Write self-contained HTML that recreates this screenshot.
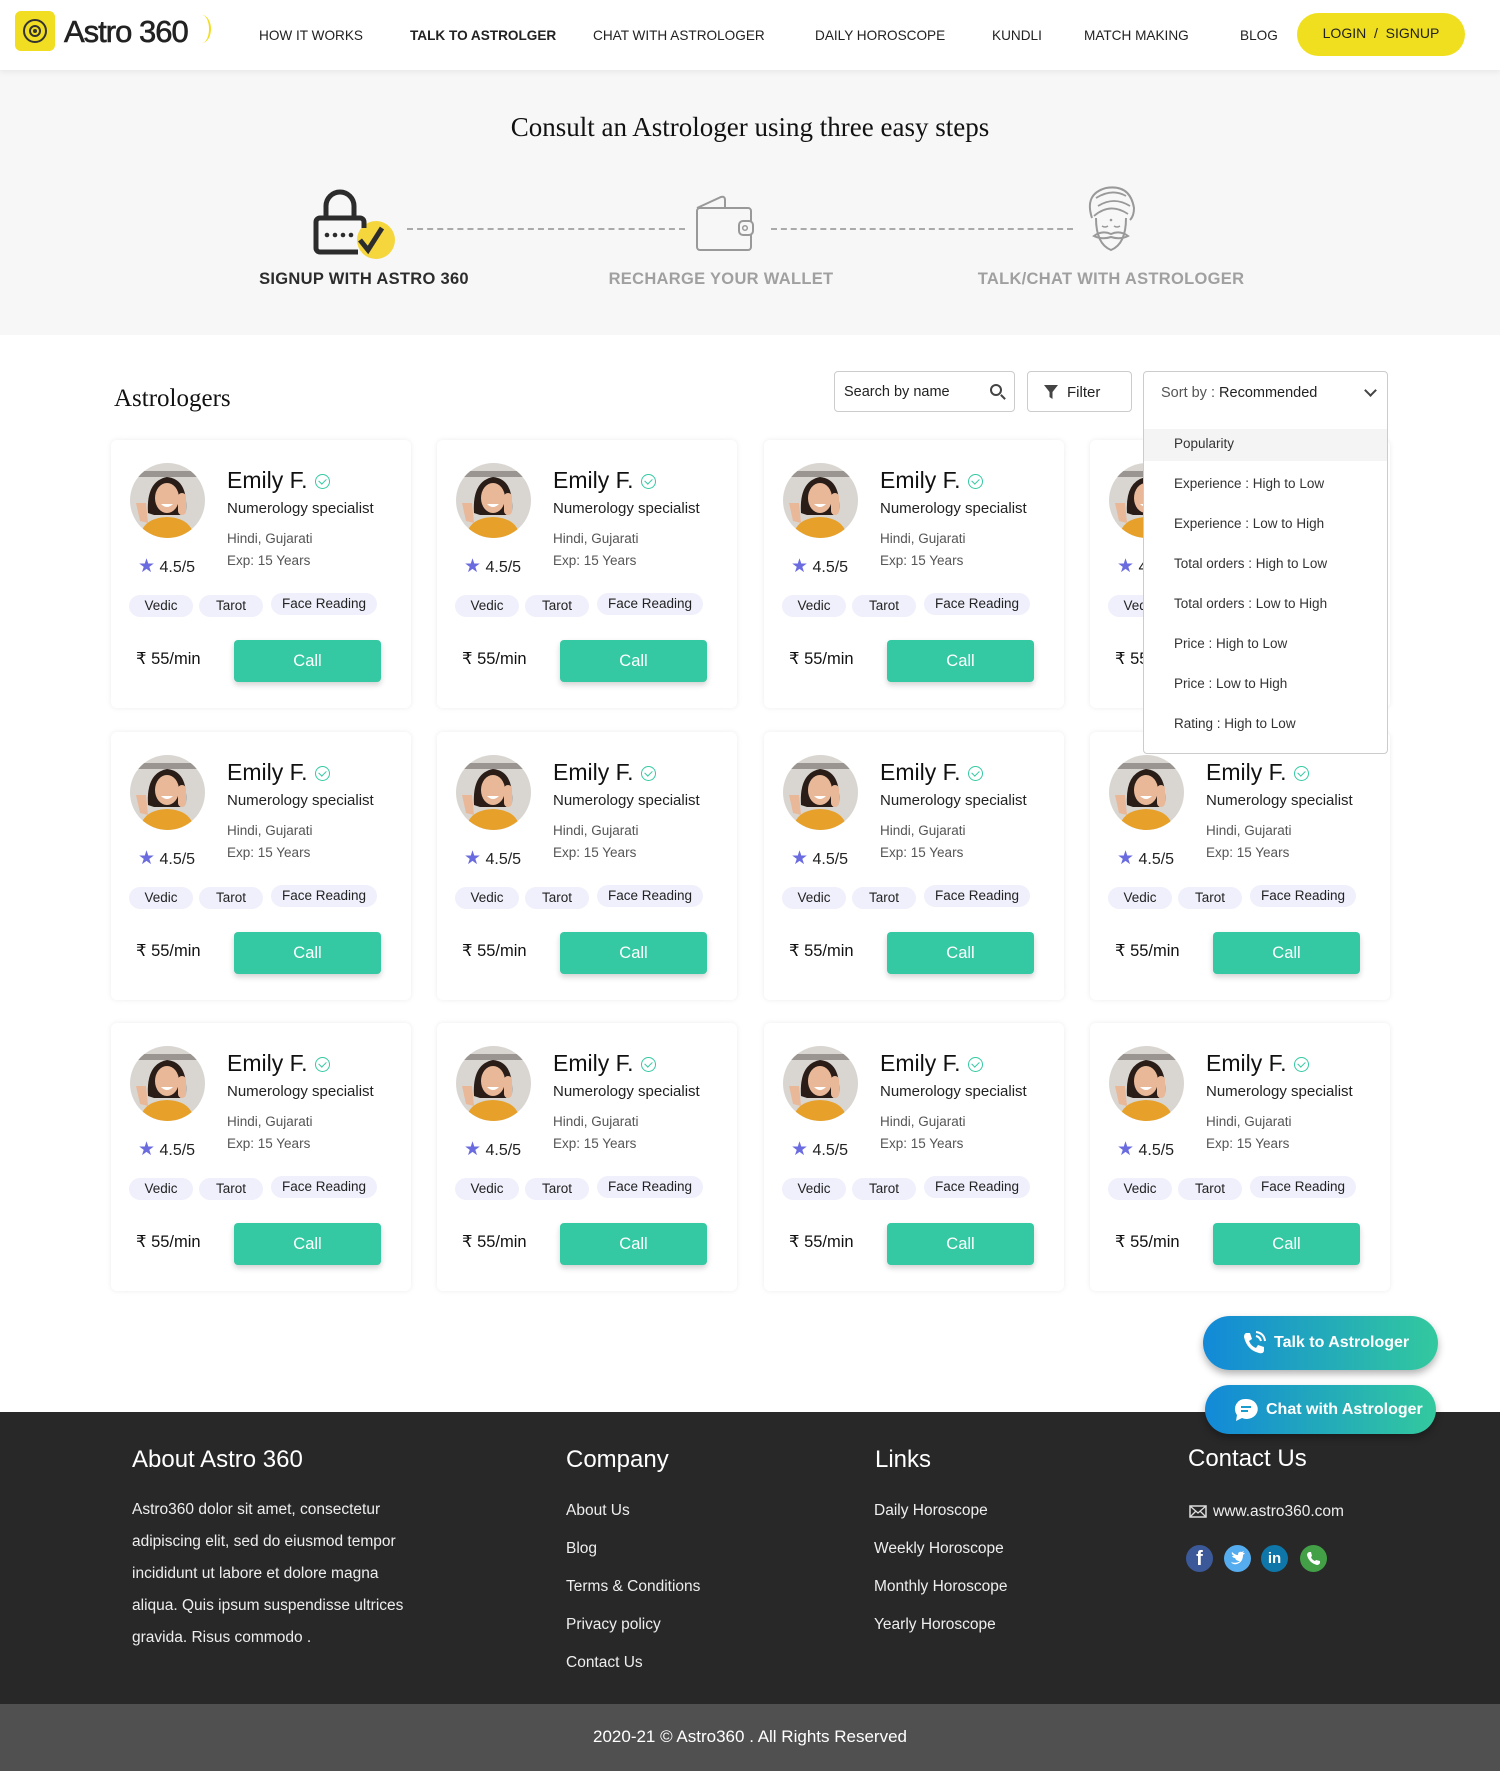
<!DOCTYPE html>
<html><head><meta charset="utf-8"><style>
*{margin:0;padding:0;box-sizing:border-box}
body{width:1500px;height:1771px;position:relative;background:#fff;font-family:"Liberation Sans",sans-serif;color:#111;overflow:hidden}
.a{position:absolute}
.hdr{left:0;top:0;width:1500px;height:70px;background:#fff;box-shadow:0 2px 6px rgba(0,0,0,.07);z-index:2}
.nav{top:28px;font-size:13.6px;color:#222;white-space:nowrap;letter-spacing:0}
.hero{left:0;top:70px;width:1500px;height:265px;background:#f7f7f7}
.step{top:270px;font-size:16.5px;font-weight:bold;letter-spacing:.3px;text-align:center;width:340px}
.dash{top:228px;border-top:2px dashed #aaa;height:0}
.card{width:300px;height:268px;background:#fff;border-radius:6px;box-shadow:0 0 6px rgba(0,0,0,.08)}
.card svg.av{position:absolute;left:19px;top:23px;width:75px;height:75px}
.nm{left:116px;top:27px;font-size:23px;color:#111}
.ck{left:204px;top:34px;width:15px;height:15px;border:1.5px solid #34c9a3;border-radius:50%}
.ck:after{content:"";position:absolute;left:3.5px;top:2px;width:4px;height:6px;border:solid #34c9a3;border-width:0 1.5px 1.5px 0;transform:rotate(45deg)}
.sp{left:116px;top:60px;font-size:15px;color:#222}
.lg{left:116px;top:91px;font-size:13.5px;color:#555}
.ex{left:116px;top:113px;font-size:13.5px;color:#555}
.rt{left:27px;top:115px;font-size:16px;color:#222}
.rt b{color:#6b6be0;font-size:19px;font-weight:normal}
.tg{top:155px;height:22px;border-radius:11px;background:#f0f0fc;font-size:13.5px;text-align:center;line-height:22px;color:#222}
.pr{left:25px;top:209px;font-size:16.5px;color:#111}
.btn{left:123px;top:200px;width:147px;height:42px;background:#34c9a3;border-radius:4px;color:#fff;font-size:16.5px;text-align:center;line-height:42px;box-shadow:0 3px 6px rgba(0,0,0,.18)}
.dd{left:1143px;top:371px;width:245px;height:383px;background:#fff;border:1px solid #ccc;border-radius:4px;z-index:3}
.di{left:30px;font-size:13.5px;color:#333}
.fh{top:1446px;font-size:24px;color:#fff}
.fl{font-size:15.5px;color:#eee}
.fb{height:54px;border-radius:27px;background:linear-gradient(90deg,#1289d8,#33c99e);color:#fff;font-weight:bold;font-size:16px;box-shadow:0 4px 8px rgba(0,0,0,.3);z-index:4}
</style></head><body>
<svg width="0" height="0" style="position:absolute"><defs>
<symbol id="av" viewBox="0 0 75 75">
<clipPath id="cc"><circle cx="37.5" cy="37.5" r="37.5"/></clipPath>
<g clip-path="url(#cc)">
<rect width="75" height="75" fill="#d9d6d2"/><rect y="8" width="75" height="6" fill="#9a9590"/>
<path d="M18 50 Q16 18 37 14 Q58 16 56 48 L50 52 L24 52Z" fill="#2a1d18"/>
<ellipse cx="37" cy="35" rx="12" ry="15" fill="#e8b898"/>
<path d="M31 41 Q37 47 43 41Z" fill="#fff"/>
<path d="M10 75 Q12 55 37 54 Q62 55 64 75Z" fill="#e7a12a"/>
<path d="M6 40 L10 58 L18 60 L16 40Z" fill="#e9b898"/>
<rect x="48" y="30" width="8" height="22" rx="4" fill="#e8b898"/>
</g></symbol></defs></svg>

<div class="a hdr">
 <div class="a" style="left:15px;top:11px;width:40px;height:40px;background:#f1dd22;border-radius:6px">
  <div class="a" style="left:8px;top:8px;width:24px;height:24px;border:2px solid #333;border-radius:50%"></div>
  <div class="a" style="left:14px;top:14px;width:12px;height:12px;border:2px solid #333;border-radius:50%"></div>
  <div class="a" style="left:18px;top:18px;width:4px;height:4px;background:#333;border-radius:50%"></div>
 </div>
 <div class="a" style="left:64px;top:14px;font-size:31px;color:#222;letter-spacing:-1px;-webkit-text-stroke:.6px #222">Astro 360</div>
 <div class="a" style="left:193px;top:15px;width:18px;height:28px;border-right:2.5px solid #f1dd22;border-radius:50%"></div>
 <div class="a nav" style="left:259px">HOW IT WORKS</div>
 <div class="a nav" style="left:410px;font-weight:bold">TALK TO ASTROLGER</div>
 <div class="a nav" style="left:593px">CHAT WITH ASTROLOGER</div>
 <div class="a nav" style="left:815px">DAILY HOROSCOPE</div>
 <div class="a nav" style="left:992px">KUNDLI</div>
 <div class="a nav" style="left:1084px">MATCH MAKING</div>
 <div class="a nav" style="left:1240px">BLOG</div>
 <div class="a" style="left:1297px;top:13px;width:168px;height:43px;background:#f0df1f;border-radius:22px;font-size:14px;text-align:center;line-height:41px;color:#222">LOGIN &nbsp;/&nbsp; SIGNUP</div>
</div>

<div class="a hero">
 <div class="a" style="left:0;width:1500px;top:42px;text-align:center;font-family:'Liberation Serif',serif;font-size:27px;color:#111">Consult an Astrologer using three easy steps</div>
</div>
<svg class="a" style="left:310px;top:186px" width="90" height="76" viewBox="0 0 90 76">
 <circle cx="66" cy="54" r="19" fill="#f5d63d"/>
 <path d="M16 32 V20 a14 14 0 0 1 28 0 V32" fill="none" stroke="#2c2c2c" stroke-width="5"/>
 <path d="M48 66 H10 a4 4 0 0 1 -4 -4 V36 a4 4 0 0 1 4 -4 H50 a4 4 0 0 1 4 4 V42" fill="none" stroke="#2c2c2c" stroke-width="5"/>
 <circle cx="17" cy="49" r="2.3" fill="#2c2c2c"/><circle cx="25" cy="49" r="2.3" fill="#2c2c2c"/><circle cx="33" cy="49" r="2.3" fill="#2c2c2c"/><circle cx="41" cy="49" r="2.3" fill="#2c2c2c"/>
 <path d="M50 54 L58 64 L72 42" fill="none" stroke="#2c2c2c" stroke-width="5"/>
</svg>
<div class="a dash" style="left:407px;width:278px"></div>
<svg class="a" style="left:695px;top:194px" width="62" height="58" viewBox="0 0 62 58">
 <path d="M2 14 L26 3 Q30 2 30 6 V14" fill="none" stroke="#999" stroke-width="2"/>
 <rect x="2" y="14" width="54" height="42" rx="3" fill="none" stroke="#999" stroke-width="2"/>
 <rect x="44" y="27" width="14" height="14" rx="4" fill="#f7f7f7" stroke="#999" stroke-width="2"/>
 <circle cx="50" cy="34" r="2.3" fill="none" stroke="#999" stroke-width="1.5"/>
</svg>
<div class="a dash" style="left:771px;width:302px"></div>
<svg class="a" style="left:1084px;top:184px" width="54" height="70" viewBox="0 0 54 70">
 <path d="M8 34 Q0 10 22 4 Q46 0 50 24 Q50 32 46 36" fill="none" stroke="#999" stroke-width="2"/>
 <path d="M10 32 Q26 18 44 30 M14 22 Q30 12 46 22 M12 14 Q28 4 42 12" fill="none" stroke="#999" stroke-width="1.8"/>
 <path d="M12 34 Q12 60 27 66 Q42 60 42 34" fill="none" stroke="#999" stroke-width="2"/>
 <path d="M18 42 q3 2 6 0 M30 42 q3 2 6 0" fill="none" stroke="#999" stroke-width="1.5"/>
 <path d="M10 52 Q18 46 27 50 Q36 46 44 52 Q36 56 27 53 Q18 56 10 52Z" fill="none" stroke="#999" stroke-width="2"/>
 <circle cx="27" cy="36" r="1.3" fill="#999"/>
</svg>
<div class="a step" style="left:194px;color:#2c2c2c">SIGNUP WITH ASTRO 360</div>
<div class="a step" style="left:551px;color:#a0a0a0">RECHARGE YOUR WALLET</div>
<div class="a step" style="left:941px;color:#a0a0a0">TALK/CHAT WITH ASTROLOGER</div>

<div class="a" style="left:114px;top:385px;font-family:'Liberation Serif',serif;font-size:25px">Astrologers</div>
<div class="a" style="left:834px;top:371px;width:181px;height:41px;border:1px solid #ccc;border-radius:4px">
 <div class="a" style="left:9px;top:12px;font-size:14.5px;color:#222">Search by name</div>
 <div class="a" style="left:155px;top:12px;width:12px;height:12px;border:2px solid #444;border-radius:50%"></div>
 <div class="a" style="left:165px;top:24px;width:6px;height:2px;background:#444;transform:rotate(45deg)"></div>
</div>
<div class="a" style="left:1027px;top:371px;width:105px;height:41px;border:1px solid #ccc;border-radius:4px">
 <svg class="a" style="left:16px;top:13px" width="14" height="14" viewBox="0 0 14 14"><path d="M0 0H14L8.5 7V14L5.5 12V7Z" fill="#444"/></svg>
 <div class="a" style="left:39px;top:12px;font-size:15px;color:#222">Filter</div>
</div>
<div class="a dd">
 <div class="a" style="left:17px;top:13px;font-size:14.5px;color:#555">Sort by : <span style="color:#222">Recommended</span></div>
 <div class="a" style="left:222px;top:14px;width:9px;height:9px;border:solid #444;border-width:0 2px 2px 0;transform:rotate(45deg)"></div>
 <div class="a" style="left:0;top:57px;width:243px;height:32px;background:#f4f4f4"></div>
 <div class="a di" style="top:64px">Popularity</div>
 <div class="a di" style="top:104px">Experience : High to Low</div>
 <div class="a di" style="top:144px">Experience : Low to High</div>
 <div class="a di" style="top:184px">Total orders : High to Low</div>
 <div class="a di" style="top:224px">Total orders : Low to High</div>
 <div class="a di" style="top:264px">Price : High to Low</div>
 <div class="a di" style="top:304px">Price : Low to High</div>
 <div class="a di" style="top:344px">Rating : High to Low</div>
</div>

<!-- cards -->
<div class="a card" style="left:111px;top:440px"><svg class="av"><use href="#av"/></svg><div class="a nm">Emily F.</div><div class="a ck"></div><div class="a sp">Numerology specialist</div><div class="a lg">Hindi, Gujarati</div><div class="a ex">Exp: 15 Years</div><div class="a rt"><b>★</b> 4.5/5</div><div class="a tg" style="left:18px;width:64px">Vedic</div><div class="a tg" style="left:88px;width:64px">Tarot</div><div class="a tg" style="left:160px;width:106px;top:153px">Face Reading</div><div class="a pr">₹ 55/min</div><div class="a btn">Call</div></div>
<div class="a card" style="left:437px;top:440px"><svg class="av"><use href="#av"/></svg><div class="a nm">Emily F.</div><div class="a ck"></div><div class="a sp">Numerology specialist</div><div class="a lg">Hindi, Gujarati</div><div class="a ex">Exp: 15 Years</div><div class="a rt"><b>★</b> 4.5/5</div><div class="a tg" style="left:18px;width:64px">Vedic</div><div class="a tg" style="left:88px;width:64px">Tarot</div><div class="a tg" style="left:160px;width:106px;top:153px">Face Reading</div><div class="a pr">₹ 55/min</div><div class="a btn">Call</div></div>
<div class="a card" style="left:764px;top:440px"><svg class="av"><use href="#av"/></svg><div class="a nm">Emily F.</div><div class="a ck"></div><div class="a sp">Numerology specialist</div><div class="a lg">Hindi, Gujarati</div><div class="a ex">Exp: 15 Years</div><div class="a rt"><b>★</b> 4.5/5</div><div class="a tg" style="left:18px;width:64px">Vedic</div><div class="a tg" style="left:88px;width:64px">Tarot</div><div class="a tg" style="left:160px;width:106px;top:153px">Face Reading</div><div class="a pr">₹ 55/min</div><div class="a btn">Call</div></div>
<div class="a card" style="left:1090px;top:440px"><svg class="av"><use href="#av"/></svg><div class="a nm">Emily F.</div><div class="a ck"></div><div class="a sp">Numerology specialist</div><div class="a lg">Hindi, Gujarati</div><div class="a ex">Exp: 15 Years</div><div class="a rt"><b>★</b> 4.5/5</div><div class="a tg" style="left:18px;width:64px">Vedic</div><div class="a tg" style="left:88px;width:64px">Tarot</div><div class="a tg" style="left:160px;width:106px;top:153px">Face Reading</div><div class="a pr">₹ 55/min</div><div class="a btn">Call</div></div>

<div class="a card" style="left:111px;top:732px"><svg class="av"><use href="#av"/></svg><div class="a nm">Emily F.</div><div class="a ck"></div><div class="a sp">Numerology specialist</div><div class="a lg">Hindi, Gujarati</div><div class="a ex">Exp: 15 Years</div><div class="a rt"><b>★</b> 4.5/5</div><div class="a tg" style="left:18px;width:64px">Vedic</div><div class="a tg" style="left:88px;width:64px">Tarot</div><div class="a tg" style="left:160px;width:106px;top:153px">Face Reading</div><div class="a pr">₹ 55/min</div><div class="a btn">Call</div></div>
<div class="a card" style="left:437px;top:732px"><svg class="av"><use href="#av"/></svg><div class="a nm">Emily F.</div><div class="a ck"></div><div class="a sp">Numerology specialist</div><div class="a lg">Hindi, Gujarati</div><div class="a ex">Exp: 15 Years</div><div class="a rt"><b>★</b> 4.5/5</div><div class="a tg" style="left:18px;width:64px">Vedic</div><div class="a tg" style="left:88px;width:64px">Tarot</div><div class="a tg" style="left:160px;width:106px;top:153px">Face Reading</div><div class="a pr">₹ 55/min</div><div class="a btn">Call</div></div>
<div class="a card" style="left:764px;top:732px"><svg class="av"><use href="#av"/></svg><div class="a nm">Emily F.</div><div class="a ck"></div><div class="a sp">Numerology specialist</div><div class="a lg">Hindi, Gujarati</div><div class="a ex">Exp: 15 Years</div><div class="a rt"><b>★</b> 4.5/5</div><div class="a tg" style="left:18px;width:64px">Vedic</div><div class="a tg" style="left:88px;width:64px">Tarot</div><div class="a tg" style="left:160px;width:106px;top:153px">Face Reading</div><div class="a pr">₹ 55/min</div><div class="a btn">Call</div></div>
<div class="a card" style="left:1090px;top:732px"><svg class="av"><use href="#av"/></svg><div class="a nm">Emily F.</div><div class="a ck"></div><div class="a sp">Numerology specialist</div><div class="a lg">Hindi, Gujarati</div><div class="a ex">Exp: 15 Years</div><div class="a rt"><b>★</b> 4.5/5</div><div class="a tg" style="left:18px;width:64px">Vedic</div><div class="a tg" style="left:88px;width:64px">Tarot</div><div class="a tg" style="left:160px;width:106px;top:153px">Face Reading</div><div class="a pr">₹ 55/min</div><div class="a btn">Call</div></div>

<div class="a card" style="left:111px;top:1023px"><svg class="av"><use href="#av"/></svg><div class="a nm">Emily F.</div><div class="a ck"></div><div class="a sp">Numerology specialist</div><div class="a lg">Hindi, Gujarati</div><div class="a ex">Exp: 15 Years</div><div class="a rt"><b>★</b> 4.5/5</div><div class="a tg" style="left:18px;width:64px">Vedic</div><div class="a tg" style="left:88px;width:64px">Tarot</div><div class="a tg" style="left:160px;width:106px;top:153px">Face Reading</div><div class="a pr">₹ 55/min</div><div class="a btn">Call</div></div>
<div class="a card" style="left:437px;top:1023px"><svg class="av"><use href="#av"/></svg><div class="a nm">Emily F.</div><div class="a ck"></div><div class="a sp">Numerology specialist</div><div class="a lg">Hindi, Gujarati</div><div class="a ex">Exp: 15 Years</div><div class="a rt"><b>★</b> 4.5/5</div><div class="a tg" style="left:18px;width:64px">Vedic</div><div class="a tg" style="left:88px;width:64px">Tarot</div><div class="a tg" style="left:160px;width:106px;top:153px">Face Reading</div><div class="a pr">₹ 55/min</div><div class="a btn">Call</div></div>
<div class="a card" style="left:764px;top:1023px"><svg class="av"><use href="#av"/></svg><div class="a nm">Emily F.</div><div class="a ck"></div><div class="a sp">Numerology specialist</div><div class="a lg">Hindi, Gujarati</div><div class="a ex">Exp: 15 Years</div><div class="a rt"><b>★</b> 4.5/5</div><div class="a tg" style="left:18px;width:64px">Vedic</div><div class="a tg" style="left:88px;width:64px">Tarot</div><div class="a tg" style="left:160px;width:106px;top:153px">Face Reading</div><div class="a pr">₹ 55/min</div><div class="a btn">Call</div></div>
<div class="a card" style="left:1090px;top:1023px"><svg class="av"><use href="#av"/></svg><div class="a nm">Emily F.</div><div class="a ck"></div><div class="a sp">Numerology specialist</div><div class="a lg">Hindi, Gujarati</div><div class="a ex">Exp: 15 Years</div><div class="a rt"><b>★</b> 4.5/5</div><div class="a tg" style="left:18px;width:64px">Vedic</div><div class="a tg" style="left:88px;width:64px">Tarot</div><div class="a tg" style="left:160px;width:106px;top:153px">Face Reading</div><div class="a pr">₹ 55/min</div><div class="a btn">Call</div></div>

<!-- floating buttons -->
<div class="a fb" style="left:1203px;top:1316px;width:235px">
 <svg class="a" style="left:38px;top:14px" width="26" height="26" viewBox="0 0 26 26"><path d="M5 3 L9 3 L11 9 L8 11 Q10 16 15 18 L17 15 L23 17 L23 21 Q22 24 18 23 Q6 20 3 7 Q3 4 5 3Z" fill="#fff"/><path d="M15 6 Q19 7 20 11 M15 2 Q23 3 24 11" fill="none" stroke="#fff" stroke-width="2"/></svg>
 <div class="a" style="left:71px;top:18px">Talk to Astrologer</div>
</div>
<div class="a fb" style="left:1205px;top:1385px;width:231px;height:49px;border-radius:25px">
 <svg class="a" style="left:29px;top:13px" width="24" height="24" viewBox="0 0 24 24"><path d="M12 1 A11 10 0 1 1 8 20 L2 23 L3 17 A10 10 0 0 1 12 1Z" fill="#fff"/><path d="M7 9H17M7 13H14" stroke="#1a9ccf" stroke-width="2"/></svg>
 <div class="a" style="left:61px;top:16px">Chat with Astrologer</div>
</div>

<!-- footer -->
<div class="a" style="left:0;top:1412px;width:1500px;height:292px;background:#282828"></div>
<div class="a" style="left:0;top:1704px;width:1500px;height:67px;background:#505050"></div>
<div class="a fh" style="left:132px">About Astro 360</div>
<div class="a fh" style="left:566px">Company</div>
<div class="a fh" style="left:875px">Links</div>
<div class="a fh" style="left:1188px;top:1445px">Contact Us</div>
<div class="a fl" style="left:132px;top:1494px;line-height:32px;width:278px">Astro360 dolor sit amet, consectetur adipiscing elit, sed do eiusmod tempor incididunt ut labore et dolore magna aliqua. Quis ipsum suspendisse ultrices gravida. Risus commodo .</div>
<div class="a fl" style="left:566px;top:1502px">About Us</div>
<div class="a fl" style="left:566px;top:1540px">Blog</div>
<div class="a fl" style="left:566px;top:1578px">Terms &amp; Conditions</div>
<div class="a fl" style="left:566px;top:1616px">Privacy policy</div>
<div class="a fl" style="left:566px;top:1654px">Contact Us</div>
<div class="a fl" style="left:874px;top:1502px">Daily Horoscope</div>
<div class="a fl" style="left:874px;top:1540px">Weekly Horoscope</div>
<div class="a fl" style="left:874px;top:1578px">Monthly Horoscope</div>
<div class="a fl" style="left:874px;top:1616px">Yearly Horoscope</div>
<svg class="a" style="left:1189px;top:1505px" width="18" height="13" viewBox="0 0 18 13"><rect x="1" y="1" width="16" height="11" fill="none" stroke="#ddd" stroke-width="1.5"/><path d="M1 1 L9 8 L17 1 M1 12 L7 6 M17 12 L11 6" fill="none" stroke="#ddd" stroke-width="1.3"/></svg>
<div class="a fl" style="left:1213px;top:1503px">www.astro360.com</div>
<div class="a" style="left:1186px;top:1545px;width:27px;height:27px;border-radius:50%;background:#3b5998;color:#fff;font-weight:bold;font-size:20px;text-align:center;line-height:29px">f</div>
<div class="a" style="left:1224px;top:1545px;width:27px;height:27px;border-radius:50%;background:#55acee"><svg width="27" height="27" viewBox="0 0 27 27"><path d="M7 17 Q12 19 16 16 Q12 16 11 13 Q9 13 8 11 Q10 11 10 11 Q7 9 8 7 Q11 10 14 10 Q14 6 18 7 L20 6 L19 8 L21 8 Q20 9 19 10 Q19 17 13 19 Q9 20 7 17Z" fill="#fff"/></svg></div>
<div class="a" style="left:1261px;top:1545px;width:27px;height:27px;border-radius:50%;background:#0e76a8;color:#fff;font-weight:bold;font-size:15px;text-align:center;line-height:27px">in</div>
<div class="a" style="left:1300px;top:1545px;width:27px;height:27px;border-radius:50%;background:#43a047"><svg width="27" height="27" viewBox="0 0 27 27"><path d="M9 7 L11 7 L12 11 L11 12 Q12 15 15 16 L16 15 L20 16 L20 18 Q19 20 17 20 Q9 18 7 10 Q7 8 9 7Z" fill="#fff"/></svg></div>
<div class="a" style="left:0;width:1500px;top:1727px;text-align:center;font-size:17px;color:#fff">2020-21 © Astro360 . All Rights Reserved</div>
</body></html>
